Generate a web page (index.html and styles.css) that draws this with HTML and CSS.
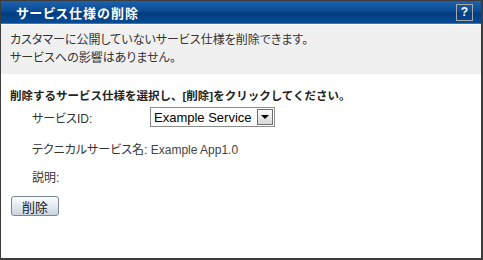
FILE: index.html
```html
<!DOCTYPE html>
<html>
	<head>
		<title>サービス仕様の削除</title>
		<meta http-equiv="Content-Type" content="text/html; charset=UTF-8">
		<link rel="stylesheet" href="styles.css">
	</head>
	<body>
		<div class="dialog">
			<div class="title">
				<span class="titleText">サービス仕様の削除</span>
				<span class="help">?</span>
			</div>
			<div class="info">
				<p>カスタマーに公開していないサービス仕様を削除できます。</p>
				<p>サービスへの影響はありません。</p>
			</div>
			<div class="content">
				<div class="lead">削除するサービス仕様を選択し、[削除]をクリックしてください。</div>
				<div class="row first">
					<span class="label">サービスID:</span>
					<span class="select">
						<span class="selText">Example Service</span>
						<span class="arrow"></span>
					</span>
				</div>
				<div class="row second">
					<span>テクニカルサービス名: <span class="latin">Example App1.0</span></span>
				</div>
				<div class="row">
					<span>説明:</span>
				</div>
				<div class="buttons">
					<button class="btn" type="button">削除</button>
				</div>
			</div>
		</div>
	</body>
</html>
```

FILE: styles.css
```css
html, body {
	margin: 0;
	padding: 0;
	background: #fff;
}

body {
	font-family: "Liberation Sans", "Noto Sans CJK JP", sans-serif;
	font-size: 12px;
	font-feature-settings: "palt";
	color: #333;
}

.dialog {
	width: 480px;
	height: 257px;
	border: 1px solid #3c3c3c;
	border-right-width: 2px;
	border-bottom-width: 2px;
	overflow: hidden;
}

.title {
	height: 22px;
	display: flex;
	align-items: center;
	justify-content: space-between;
	padding: 0 8px 0 15px;
	background: linear-gradient(#1d62ad 0%, #0c4c95 45%, #033c80 55%, #064b95 100%);
	border-bottom: 1px solid #2c7ac6;
	box-shadow: 0 1px 0 #fff;
}

.titleText {
	color: #fff;
	font-weight: bold;
	font-size: 13px;
	letter-spacing: 1px;
}

.help {
	width: 15px;
	height: 15px;
	border: 1px solid #a8a8a8;
	color: #fff;
	font-weight: bold;
	font-size: 12px;
	line-height: 15px;
	text-align: center;
}

.info {
	margin-top: 1px;
	background: #f0f0f0;
	padding: 6px 9px 7px;
}

.info p {
	margin: 0;
	line-height: 18px;
}

.content {
	padding: 13px 9px 0;
}

.lead {
	font-weight: bold;
	font-size: 11.5px;
	font-feature-settings: normal;
	color: #222;
	line-height: 18px;
}

.row {
	display: flex;
	align-items: center;
	padding-left: 22px;
	height: 28px;
}

.row.first {
	height: 24px;
}

.row.second {
	margin-top: 5px;
}

.latin {
	color: #444;
}

.label {
	width: 118px;
}

.select {
	display: flex;
	align-items: center;
	width: 120px;
	height: 18px;
	border: 1px solid #8c8c8c;
	padding-left: 3px;
	background: #fff;
}

.selText {
	flex: 1;
	font-size: 13px;
	color: #000;
}

.arrow {
	width: 14px;
	height: 14px;
	margin-right: 1px;
	border: 1px solid #707070;
	background: linear-gradient(#fafafa, #d8d8d8);
	position: relative;
}

.arrow:after {
	content: "";
	position: absolute;
	left: 3px;
	top: 5px;
	border-left: 4px solid transparent;
	border-right: 4px solid transparent;
	border-top: 4px solid #000;
}

.buttons {
	padding-top: 6px;
	padding-left: 1px;
}

.btn {
	width: 48px;
	height: 20px;
	padding: 0;
	font-family: "Liberation Sans", "Noto Sans CJK JP", sans-serif;
	font-size: 13px;
	color: #222;
	border: 1px solid #7a8797;
	border-radius: 3px;
	background: linear-gradient(#fbfcfd, #e4eaf1 50%, #c9d4e0);
}
```
